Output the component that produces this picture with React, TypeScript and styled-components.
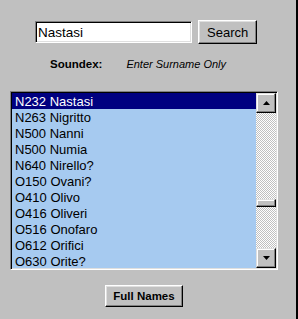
import { createGlobalStyle } from "styled-components";
import styled from "styled-components";

const GlobalStyle = createGlobalStyle`
  html, body {
    margin: 0;
    padding: 0;
    background: #c0c0c0;
  }
`;

const nomes = [
  "N232 Nastasi",
  "N263 Nigritto",
  "N500 Nanni",
  "N500 Numia",
  "N640 Nirello?",
  "O150 Ovani?",
  "O410 Olivo",
  "O416 Oliveri",
  "O516 Onofaro",
  "O612 Orifici",
  "O630 Orite?",
];

export default function App() {
  return (
    <>
      <GlobalStyle />
      <Pagina>
        <LinhaBusca>
          <CampoTexto type="text" defaultValue="Nastasi" />
          <Botao type="button">Search</Botao>
        </LinhaBusca>
        <LinhaSoundex>
          <Rotulo>Soundex:</Rotulo>
          <Dica>Enter Surname Only</Dica>
        </LinhaSoundex>
        <CaixaLista>
          <Itens>
            {nomes.map((nome, index) => (
              <Item key={index} $selecionado={index === 0}>{nome}</Item>
            ))}
          </Itens>
          <BarraRolagem>
            <BotaoRolagem>
              <svg width="7" height="4" viewBox="0 0 7 4"><polygon points="3.5,0 7,4 0,4" fill="#000" /></svg>
            </BotaoRolagem>
            <Trilho>
              <Polegar style={{ marginTop: 86 }} />
            </Trilho>
            <BotaoRolagem>
              <svg width="7" height="4" viewBox="0 0 7 4"><polygon points="0,0 7,0 3.5,4" fill="#000" /></svg>
            </BotaoRolagem>
          </BarraRolagem>
        </CaixaLista>
        <LinhaRodape>
          <Botao type="button" $negrito>Full Names</Botao>
        </LinhaRodape>
      </Pagina>
    </>
  );
}

const Pagina = styled.div`
  width: 296px;
  height: 319px;
  border-right: 2px solid #000;
  background: #c0c0c0;
  font-family: "Liberation Sans", Arial, sans-serif;
  color: #000;
  overflow: hidden;
`;

const LinhaBusca = styled.div`
  display: flex;
  align-items: center;
  gap: 6px;
  padding: 20px 0 0 35px;
`;

const CampoTexto = styled.input`
  box-sizing: border-box;
  width: 157px;
  height: 22px;
  margin: 0;
  padding: 0 2px;
  font-family: inherit;
  font-size: 13.5px;
  color: #000;
  background: #fff;
  border: 1px solid;
  border-color: #808080 #fff #fff #808080;
  box-shadow: inset 1px 1px #000, inset -1px -1px #dfdfdf;
  outline: none;
`;

const Botao = styled.button<{ $negrito?: boolean }>`
  box-sizing: border-box;
  height: ${(props) => (props.$negrito ? "22px" : "24px")};
  padding: 0 ${(props) => (props.$negrito ? "7px" : "8px")};
  margin: 0;
  font-family: inherit;
  font-size: ${(props) => (props.$negrito ? "11.5px" : "13px")};
  font-weight: ${(props) => (props.$negrito ? "bold" : "normal")};
  color: #000;
  background: #c0c0c0;
  border: 1px solid;
  border-color: #fff #000 #000 #fff;
  box-shadow: inset -1px -1px #808080, inset 1px 1px #dfdfdf;
  border-radius: 0;
`;

const LinhaSoundex = styled.div`
  display: flex;
  align-items: baseline;
  gap: 24px;
  margin-top: 14px;
  padding-left: 50px;
  font-size: 11px;
  line-height: 13px;
`;

const Rotulo = styled.span`
  font-weight: bold;
  font-size: 11.5px;
`;

const Dica = styled.span`
  font-style: italic;
`;

const CaixaLista = styled.div`
  box-sizing: border-box;
  display: flex;
  width: 268px;
  height: 179px;
  margin: 20px 0 0 10px;
  background: #a6caf0;
  border: 1px solid;
  border-color: #808080 #fff #fff #808080;
  box-shadow: inset 1px 1px #000, inset -1px -1px #dfdfdf;
  padding: 1px;
`;

const Itens = styled.div`
  flex: 1;
  overflow: hidden;
`;

const Item = styled.div<{ $selecionado?: boolean }>`
  height: 16px;
  line-height: 17px;
  padding-left: 3px;
  font-size: 13px;
  white-space: nowrap;
  background: ${(props) => (props.$selecionado ? "#000080" : "transparent")};
  color: ${(props) => (props.$selecionado ? "#fff" : "#000")};
`;

const BarraRolagem = styled.div`
  display: flex;
  flex-direction: column;
  width: 20px;
`;

const BotaoRolagem = styled.div`
  box-sizing: border-box;
  display: flex;
  align-items: center;
  justify-content: center;
  height: 20px;
  background: #c0c0c0;
  border: 1px solid;
  border-color: #dfdfdf #000 #000 #dfdfdf;
  box-shadow: inset -1px -1px #808080, inset 1px 1px #fff;
`;

const Trilho = styled.div`
  flex: 1;
  background-image: conic-gradient(#c0c0c0 25%, #fff 0 50%, #c0c0c0 0 75%, #fff 0);
  background-size: 2px 2px;
`;

const Polegar = styled.div`
  box-sizing: border-box;
  height: 8px;
  background: #c0c0c0;
  border: 1px solid;
  border-color: #dfdfdf #000 #000 #dfdfdf;
  box-shadow: inset -1px -1px #808080, inset 1px 1px #fff;
`;

const LinhaRodape = styled.div`
  display: flex;
  justify-content: center;
  width: 268px;
  margin: 15px 0 0 10px;
`;
